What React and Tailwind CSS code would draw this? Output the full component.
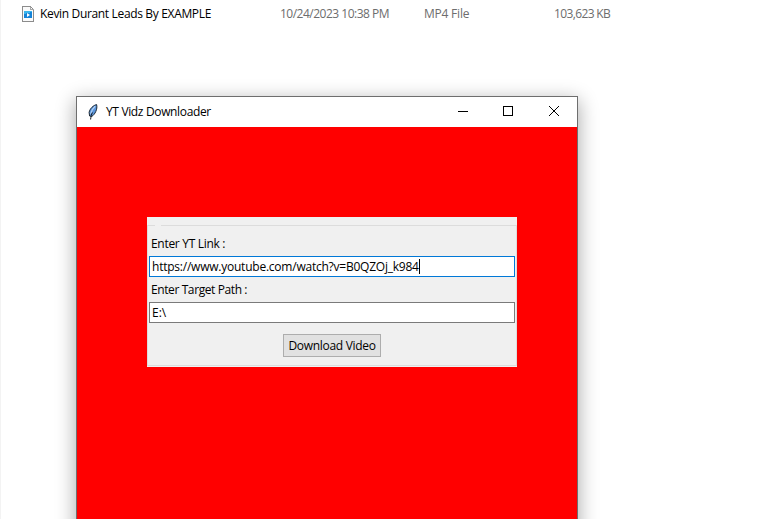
function Mp4Icon() {
  return (
    <svg width="12" height="16" viewBox="0 0 12 16" shapeRendering="crispEdges" className="block shrink-0">
      <path d="M0.5 0.5H8.5L11.5 3.5V15.5H0.5Z" fill="#fafafa" stroke="#8c8c8c" />
      <path d="M8.5 0.5V3.5H11.5" fill="none" stroke="#a8a8a8" />
      <rect x="2" y="5" width="8" height="7" fill="#1583d8" />
      <path d="M2 5H10V6L2 8Z" fill="#39b5ec" />
      <path d="M5 7L8 9L5 11Z" fill="#fff" shapeRendering="auto" />
    </svg>
  );
}

function FeatherIcon() {
  return (
    <svg width="10" height="16" viewBox="0 0 10 16" className="-mt-px block shrink-0">
      <path d="M8.6 0.6C5.5 1.2 1.8 4.6 1.1 8.4L1.6 12L3.7 12.5C7 10.5 9.8 5 8.6 0.6Z" fill="#5a95dc" stroke="#101820" strokeWidth="0.9" />
      <path d="M7.2 2.3C5 4.3 3.2 7 2.6 9.8" fill="none" stroke="#b4d2f4" strokeWidth="1.2" />
      <path d="M4.4 8.5C3.4 10.5 2.9 12.5 2.6 15.5" fill="none" stroke="#101820" strokeWidth="1" />
    </svg>
  );
}

function FileRow() {
  return (
    <div className="flex h-[28px] items-center pl-[21px] whitespace-nowrap text-[#6d6d6d]">
      <Mp4Icon />
      <span className="ml-[6px] w-[240px] text-black tracking-[-0.34px]">Kevin Durant Leads By EXAMPLE</span>
      <span className="w-[144px] tracking-[-0.5px]">10/24/2023 10:38 PM</span>
      <span className="w-[130px] tracking-[-0.22px]">MP4 File</span>
      <span className="tracking-[-0.63px]">103,623 KB</span>
    </div>
  );
}

function TitleBar() {
  return (
    <div className="flex h-[30px] items-center bg-white pl-[11px]">
      <FeatherIcon />
      <span className="ml-[8px] flex-1 tracking-[-0.35px]">YT Vidz Downloader</span>
      <svg width="103" height="12" viewBox="0 0 103 12" fill="none" stroke="#000" className="mr-[16px] block">
        <path d="M0 5.5H10" shapeRendering="crispEdges" />
        <rect x="45.5" y="0.5" width="9" height="9" shapeRendering="crispEdges" />
        <path d="M91 0L101 10M101 0L91 10" />
      </svg>
    </div>
  );
}

function Panel() {
  return (
    <div className="h-[150px] w-[370px] bg-[#f0f0f0] pt-[8px]">
      <div className="flex h-px gap-[6px]">
        <div className="w-[8px] bg-[#dcdcdc]" />
        <div className="flex-1 bg-[#dcdcdc]" />
      </div>
      <div className="flex h-[140px] flex-col border-x border-b border-[#dcdcdc] px-px pt-[5px]">
        <div className="flex h-[25px] items-center pl-[2px] tracking-[-0.3px]">Enter YT Link :</div>
        <div className="flex h-[21px] shrink-0 items-center border border-[#0078d7] bg-white pl-[2px]">
          <span className="tracking-[-0.23px]">https://www.youtube.com/watch?v=B0QZOj_k984</span>
          <span className="h-[15px] w-px bg-black" />
        </div>
        <div className="flex h-[25px] items-center pl-[2px] tracking-[-0.4px]">Enter Target Path :</div>
        <div className="flex h-[21px] shrink-0 items-center border border-[#7a7a7a] bg-white pl-[2px]">E:\</div>
        <button className="mt-[11px] flex h-[23px] w-[98px] shrink-0 items-center justify-center self-center border border-[#adadad] bg-[#e1e1e1] tracking-[-0.3px] whitespace-nowrap">
          Download Video
        </button>
      </div>
    </div>
  );
}

export default function App() {
  return (
    <div className="h-[519px] w-[775px] overflow-hidden border-l border-[#f3f3f3] bg-white font-['Open_Sans','Noto_Sans',sans-serif] text-[12px] leading-[16px] text-black">
      <FileRow />
      <div className="mt-[68px] ml-[75px] h-[500px] w-[502px] border border-[#6e6e6e] bg-[#ff0000] shadow-[0_5px_18px_1px_rgba(0,0,0,0.33)]">
        <TitleBar />
        <div className="pt-[90px] pl-[70px]">
          <Panel />
        </div>
      </div>
    </div>
  );
}
